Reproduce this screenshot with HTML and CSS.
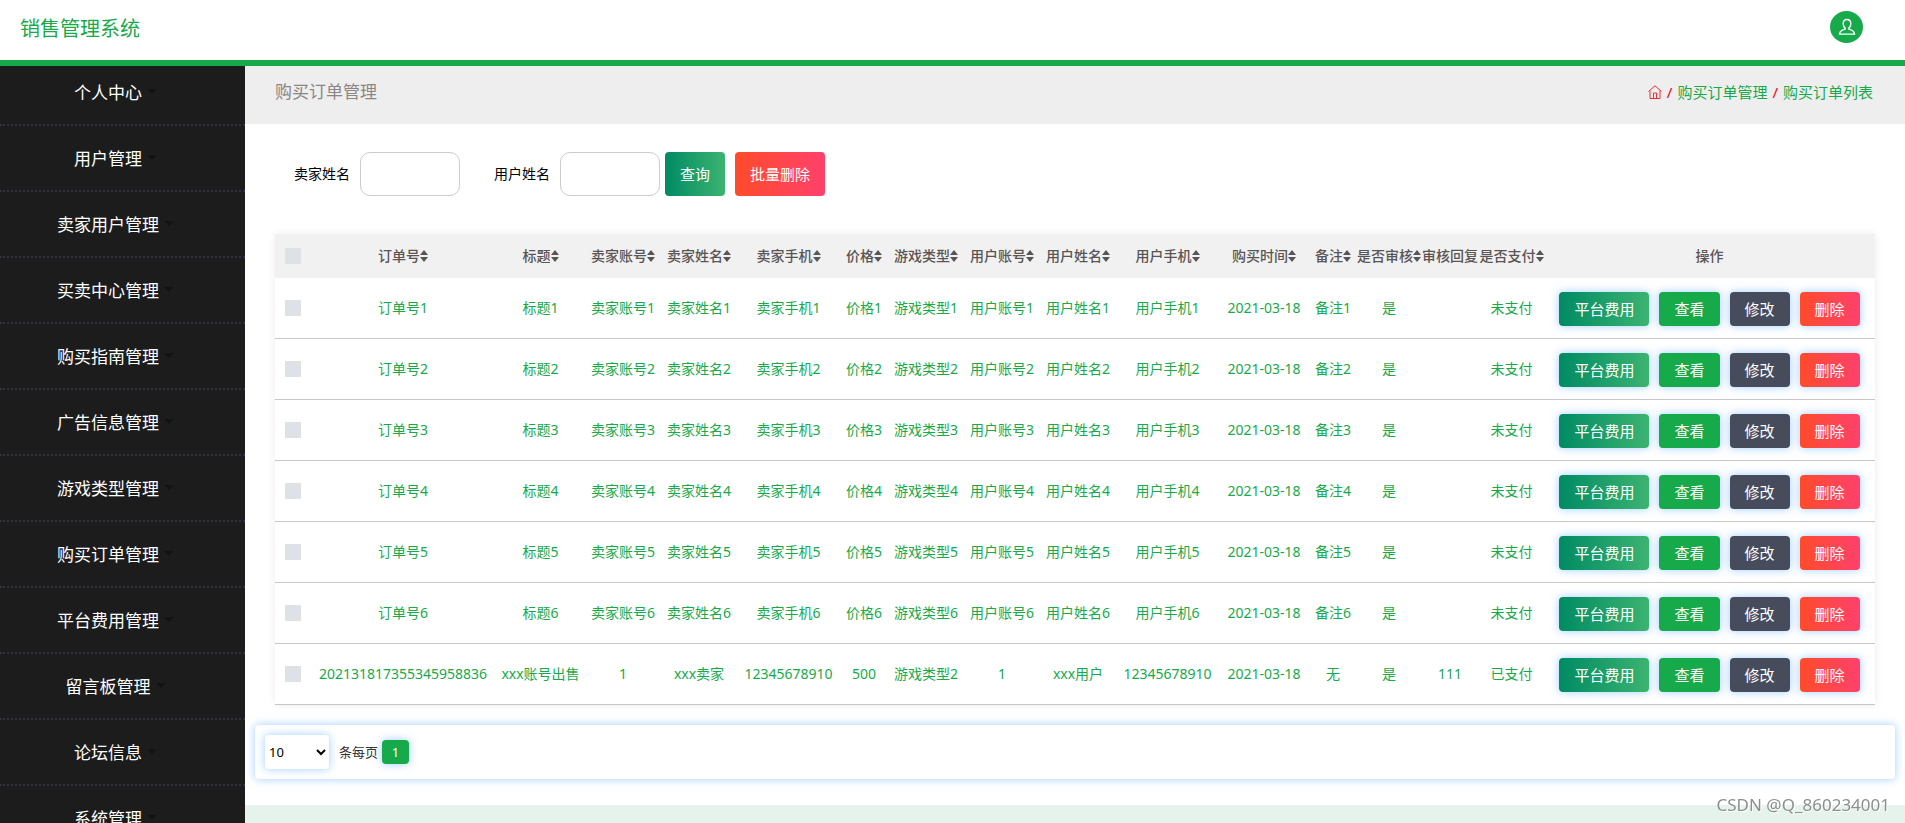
FILE: index.html
```html
<!DOCTYPE html>
<html lang="zh-CN">
<head>
<meta charset="utf-8">
<title>销售管理系统</title>
<link rel="stylesheet" href="styles.css">
</head>
<body>
<svg class="sprite" aria-hidden="true">
  <symbol id="sort" viewBox="0 0 8 12"><path d="M4 0 8 5H0zM0 7h8L4 12z"/></symbol>
</svg>
<header class="topbar">
  <h1 class="brand">销售管理系统</h1>
  <button class="avatar" type="button" aria-label="用户">
    <svg viewBox="0 0 18 18" width="18" height="18"><path d="M9 1.500c-2.300 0-3.800 1.700-3.800 4.200 0 1.700.7 3.300 1.900 4.200v1.200c-2.800.7-5.600 1.900-5.600 5h15c0-3.100-2.800-4.300-5.600-5V9.900c1.200-.9 1.900-2.500 1.900-4.200 0-2.500-1.500-4.200-3.800-4.200z"/></svg>
  </button>
</header>
<div class="layout">
  <nav class="sidebar">
    <ul class="menu">
      <li><a href="#">个人中心</a></li>
      <li><a href="#">用户管理</a></li>
      <li><a href="#">卖家用户管理</a></li>
      <li><a href="#">买卖中心管理</a></li>
      <li><a href="#">购买指南管理</a></li>
      <li><a href="#">广告信息管理</a></li>
      <li><a href="#">游戏类型管理</a></li>
      <li><a href="#">购买订单管理</a></li>
      <li><a href="#">平台费用管理</a></li>
      <li><a href="#">留言板管理</a></li>
      <li><a href="#">论坛信息</a></li>
      <li><a href="#">系统管理</a></li>
    </ul>
  </nav>
  <main class="content">
    <div class="pagehead">
      <h2 class="pagetitle">购买订单管理</h2>
      <div class="crumbs">
        <a href="#" aria-label="首页"><svg class="home" viewBox="0 0 14 14" width="14" height="14"><path d="M.5 6.500 7 .8l6.500 5.700M2 5.500v8h10v-8M5.500 13.500V8h3v5.500"/></svg></a>
        <span>/</span><a href="#">购买订单管理</a><span>/</span><a href="#">购买订单列表</a>
      </div>
    </div>
    <form class="filters">
      <label for="seller">卖家姓名</label><input id="seller" type="text">
      <label for="buyer" class="second">用户姓名</label><input id="buyer" type="text">
      <button type="button" class="btn query">查询</button>
      <button type="button" class="btn danger">批量删除</button>
    </form>
    <table class="orders">
      <colgroup><col class="w35"><col class="w186"><col class="w89"><col class="w76"><col class="w76"><col class="w103"><col class="w48"><col class="w76"><col class="w76"><col class="w76"><col class="w103"><col class="w90"><col class="w48"><col class="w64"><col class="w58"><col class="w65"><col class="w331"></colgroup>
      <thead>
        <tr><th><input type="checkbox" aria-label="全选"></th><th>订单号<svg class="sort"><use href="#sort"/></svg></th><th>标题<svg class="sort"><use href="#sort"/></svg></th><th>卖家账号<svg class="sort"><use href="#sort"/></svg></th><th>卖家姓名<svg class="sort"><use href="#sort"/></svg></th><th>卖家手机<svg class="sort"><use href="#sort"/></svg></th><th>价格<svg class="sort"><use href="#sort"/></svg></th><th>游戏类型<svg class="sort"><use href="#sort"/></svg></th><th>用户账号<svg class="sort"><use href="#sort"/></svg></th><th>用户姓名<svg class="sort"><use href="#sort"/></svg></th><th>用户手机<svg class="sort"><use href="#sort"/></svg></th><th>购买时间<svg class="sort"><use href="#sort"/></svg></th><th>备注<svg class="sort"><use href="#sort"/></svg></th><th>是否审核<svg class="sort"><use href="#sort"/></svg></th><th>审核回复</th><th>是否支付<svg class="sort"><use href="#sort"/></svg></th><th>操作</th></tr>
      </thead>
      <tbody>
        <tr><td><input type="checkbox" aria-label="选择"></td><td>订单号1</td><td>标题1</td><td>卖家账号1</td><td>卖家姓名1</td><td>卖家手机1</td><td>价格1</td><td>游戏类型1</td><td>用户账号1</td><td>用户姓名1</td><td>用户手机1</td><td>2021-03-18</td><td>备注1</td><td>是</td><td></td><td>未支付</td><td><div class="ops"><button type="button" class="btn fee">平台费用</button><button type="button" class="btn view">查看</button><button type="button" class="btn edit">修改</button><button type="button" class="btn danger">删除</button></div></td></tr>
        <tr><td><input type="checkbox" aria-label="选择"></td><td>订单号2</td><td>标题2</td><td>卖家账号2</td><td>卖家姓名2</td><td>卖家手机2</td><td>价格2</td><td>游戏类型2</td><td>用户账号2</td><td>用户姓名2</td><td>用户手机2</td><td>2021-03-18</td><td>备注2</td><td>是</td><td></td><td>未支付</td><td><div class="ops"><button type="button" class="btn fee">平台费用</button><button type="button" class="btn view">查看</button><button type="button" class="btn edit">修改</button><button type="button" class="btn danger">删除</button></div></td></tr>
        <tr><td><input type="checkbox" aria-label="选择"></td><td>订单号3</td><td>标题3</td><td>卖家账号3</td><td>卖家姓名3</td><td>卖家手机3</td><td>价格3</td><td>游戏类型3</td><td>用户账号3</td><td>用户姓名3</td><td>用户手机3</td><td>2021-03-18</td><td>备注3</td><td>是</td><td></td><td>未支付</td><td><div class="ops"><button type="button" class="btn fee">平台费用</button><button type="button" class="btn view">查看</button><button type="button" class="btn edit">修改</button><button type="button" class="btn danger">删除</button></div></td></tr>
        <tr><td><input type="checkbox" aria-label="选择"></td><td>订单号4</td><td>标题4</td><td>卖家账号4</td><td>卖家姓名4</td><td>卖家手机4</td><td>价格4</td><td>游戏类型4</td><td>用户账号4</td><td>用户姓名4</td><td>用户手机4</td><td>2021-03-18</td><td>备注4</td><td>是</td><td></td><td>未支付</td><td><div class="ops"><button type="button" class="btn fee">平台费用</button><button type="button" class="btn view">查看</button><button type="button" class="btn edit">修改</button><button type="button" class="btn danger">删除</button></div></td></tr>
        <tr><td><input type="checkbox" aria-label="选择"></td><td>订单号5</td><td>标题5</td><td>卖家账号5</td><td>卖家姓名5</td><td>卖家手机5</td><td>价格5</td><td>游戏类型5</td><td>用户账号5</td><td>用户姓名5</td><td>用户手机5</td><td>2021-03-18</td><td>备注5</td><td>是</td><td></td><td>未支付</td><td><div class="ops"><button type="button" class="btn fee">平台费用</button><button type="button" class="btn view">查看</button><button type="button" class="btn edit">修改</button><button type="button" class="btn danger">删除</button></div></td></tr>
        <tr><td><input type="checkbox" aria-label="选择"></td><td>订单号6</td><td>标题6</td><td>卖家账号6</td><td>卖家姓名6</td><td>卖家手机6</td><td>价格6</td><td>游戏类型6</td><td>用户账号6</td><td>用户姓名6</td><td>用户手机6</td><td>2021-03-18</td><td>备注6</td><td>是</td><td></td><td>未支付</td><td><div class="ops"><button type="button" class="btn fee">平台费用</button><button type="button" class="btn view">查看</button><button type="button" class="btn edit">修改</button><button type="button" class="btn danger">删除</button></div></td></tr>
        <tr><td><input type="checkbox" aria-label="选择"></td><td>202131817355345958836</td><td>xxx账号出售</td><td>1</td><td>xxx卖家</td><td>12345678910</td><td>500</td><td>游戏类型2</td><td>1</td><td>xxx用户</td><td>12345678910</td><td>2021-03-18</td><td>无</td><td>是</td><td>111</td><td>已支付</td><td><div class="ops"><button type="button" class="btn fee">平台费用</button><button type="button" class="btn view">查看</button><button type="button" class="btn edit">修改</button><button type="button" class="btn danger">删除</button></div></td></tr>
      </tbody>
    </table>
    <div class="pager">
      <select id="size"><option>10</option><option>25</option><option>50</option></select>
      <label for="size">条每页</label>
      <button type="button" class="page">1</button>
    </div>
  </main>
</div>
<div class="watermark">CSDN @Q_860234001</div>
</body>
</html>
```
FILE: styles.css
```css
* { box-sizing: border-box; }
body {
  margin: 0;
  height: 100vh;
  overflow: hidden;
  display: flex;
  flex-direction: column;
  background: #e6f3ec;
  font: 14px/20px "Noto Sans", "Noto Sans CJK SC", sans-serif;
  color: #000;
}
button, input, select { font: inherit; margin: 0; }
a { color: inherit; text-decoration: none; }
.sprite { position: absolute; width: 0; height: 0; }

.topbar {
  flex: none;
  display: flex;
  justify-content: space-between;
  align-items: flex-start;
  height: 66px;
  padding: 11px 42px 0 20px;
  background: #fff;
  border-bottom: 6px solid #17aa4a;
}
.brand { margin: 0; font-size: 20px; line-height: 36px; font-weight: 400; color: #17aa4a; }
.avatar {
  display: flex;
  align-items: center;
  justify-content: center;
  width: 33px;
  height: 32px;
  padding: 0;
  border: 0;
  border-radius: 50%;
  background: #17aa4a;
}
.avatar path { fill: none; stroke: #fff; stroke-width: 1.4; }

.layout { flex: 1; min-height: 0; display: flex; }
.sidebar { flex: none; width: 245px; background: #1c1c1c; overflow-y: auto; scrollbar-width: none; }
.menu { list-style: none; margin: 0; padding: 0; }
.menu li { padding: 20px 14px 18px 0; border-bottom: 2px dotted #2d3140; }
.menu li:first-child { padding-top: 14px; }
.menu a {
  display: flex;
  align-items: center;
  justify-content: center;
  gap: 5px;
  font-size: 17px;
  line-height: 26px;
  color: #fff;
}
.menu a::after {
  content: "";
  margin-bottom: 4px;
  border: 5px solid transparent;
  border-top-color: #131313;
  border-bottom: 0;
}

.content { flex: 1; min-width: 0; align-self: flex-start; padding-bottom: 26px; background: #fff; }
.pagehead {
  display: flex;
  justify-content: space-between;
  align-items: center;
  height: 58px;
  padding: 0 32px 6px 30px;
  background: #eee;
}
.pagetitle { margin: 0; font-size: 17px; font-weight: 400; color: #8c8585; }
.crumbs { display: flex; align-items: center; gap: 5px; font-size: 15px; color: #17aa4a; }
.crumbs span { color: #f00020; }
.crumbs a:first-child { display: flex; }
.home path { fill: none; stroke: #f03030; stroke-width: 1; }

.filters { display: flex; align-items: center; padding: 28px 49px 38px; }
.filters input {
  width: 100px;
  height: 44px;
  margin: 0 5px 0 10px;
  padding: 0 12px;
  border: 1px solid #ccc;
  border-radius: 10px;
}
.filters .second { margin-left: 29px; }
.filters .btn { height: 44px; margin-right: 10px; }

.btn {
  height: 34px;
  padding: 0 15px;
  border: 0;
  border-radius: 4px;
  color: #fff;
  font-size: 15px;
  line-height: 20px;
  white-space: nowrap;
}
.query, .fee { background: linear-gradient(90deg, #008b63, #3cb371); }
.danger { background: linear-gradient(90deg, #ff4b2b, #ff416c); }
.view { background: #17aa4a; }
.edit { background: #474c5c; }

.orders {
  width: calc(100% - 60px);
  margin: 0 30px;
  table-layout: fixed;
  border-collapse: separate;
  border-spacing: 0;
  box-shadow: 0 0 8px rgba(0, 0, 0, .08);
}
.w35 { width: 35px; } .w186 { width: 186px; } .w89 { width: 89px; }
.w76 { width: 76px; } .w103 { width: 103px; } .w48 { width: 48px; }
.w90 { width: 90px; } .w64 { width: 64px; } .w58 { width: 58px; }
.w65 { width: 65px; } .w331 { width: 331px; }
.orders th, .orders td { padding: 0; text-align: center; white-space: nowrap; }
.orders th { height: 44px; background: #f1f1f1; color: #5a5555; font-weight: 500; }
.orders td { height: 61px; border-bottom: 1px solid #c8c6c8; color: #17aa4a; }
.orders input {
  display: block;
  appearance: none;
  width: 16px;
  height: 16px;
  margin-left: 10px;
  background: #dee2e6;
}
.sort { width: 8px; height: 12px; vertical-align: -1px; fill: #5a5555; }
.ops { display: flex; justify-content: center; gap: 10px; padding-top: 2px; }
.ops .btn, .pager, .pager select, .page { box-shadow: 0 0 8px rgba(64, 158, 255, .5); }

.pager {
  display: flex;
  align-items: center;
  height: 54px;
  margin: 20px 10px 0;
  padding: 0 10px;
  border-radius: 4px;
  font-size: 13px;
  color: #333;
}
.pager select { width: 64px; height: 34px; margin-right: 10px; border: 0; border-radius: 4px; background: #fff; color: #000; }
.page { width: 27px; height: 24px; margin-left: 4px; padding: 0; border: 0; border-radius: 4px; background: #17aa4a; color: #fff; }

.watermark {
  position: fixed;
  right: 15px;
  bottom: 6px;
  font-size: 17px;
  line-height: 24px;
  color: #8c8f8d;
  text-shadow: 1px 1px 0 #fff;
}
```
